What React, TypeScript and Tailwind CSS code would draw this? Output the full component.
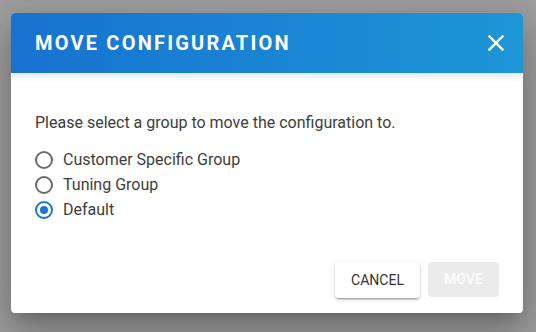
import { useState } from 'react'

const groups = ['Customer Specific Group', 'Tuning Group', 'Default']

export default function App() {
  const [selected, setSelected] = useState('Default')

  return (
    <div className="h-[332px] w-[536px] bg-[#9e9e9e] pt-[13px] pl-[11px] font-['Roboto',sans-serif]">
      <div className="relative flex h-[300px] w-[512px] flex-col overflow-hidden rounded-[4px] bg-white shadow-[0_11px_15px_-7px_rgba(0,0,0,0.2),0_24px_38px_3px_rgba(0,0,0,0.14),0_9px_46px_8px_rgba(0,0,0,0.12)]">
        {/* Header */}
        <div className="relative z-10 flex h-[60px] items-center justify-between bg-linear-to-r from-[#1872d0] to-[#1e96d7] pl-6 pr-[11px] shadow-[0_2px_8px_rgba(30,80,160,0.18)]">
          <h2 className="text-[20px] font-bold tracking-[0.11em] text-white">MOVE CONFIGURATION</h2>
          <button className="flex h-[32px] w-[32px] items-center justify-center text-white">
            <svg width="28" height="28" viewBox="0 0 24 24" fill="currentColor">
              <path d="M19 6.41L17.59 5 12 10.59 6.41 5 5 6.41 10.59 12 5 17.59 6.41 19 12 13.41 17.59 19 19 17.59 13.41 12z" />
            </svg>
          </button>
        </div>

        {/* Body */}
        <div className="flex-1 px-6 pt-[38px]">
          <p className="text-[16px] leading-6 text-[#3d3d3d]">Please select a group to move the configuration to.</p>
          <div className="mt-3 flex flex-col">
            {groups.map(g => (
              <label key={g} className="flex h-[25px] cursor-pointer items-center gap-[10px]" onClick={() => setSelected(g)}>
                <span
                  className={`flex h-[18px] w-[18px] items-center justify-center rounded-full border-2 ${
                    selected === g ? 'border-[#1976d2]' : 'border-[#6b6b6b]'
                  }`}
                >
                  {selected === g && <span className="h-[8px] w-[8px] rounded-full bg-[#1976d2]" />}
                </span>
                <span className="text-[16px] text-[#3d3d3d]">{g}</span>
              </label>
            ))}
          </div>
        </div>

        {/* Actions */}
        <div className="flex justify-end gap-2 pr-6 pb-[15px]">
          <button className="h-[36px] w-[85px] rounded-[4px] bg-white text-[14px] font-normal text-[#333] shadow-[0_3px_1px_-2px_rgba(0,0,0,0.2),0_2px_2px_0_rgba(0,0,0,0.14),0_1px_5px_0_rgba(0,0,0,0.12)]">
            CANCEL
          </button>
          <button disabled className="h-[35px] w-[71px] rounded-[4px] bg-[#ebebeb] text-[14px] font-bold text-[#fbfbfb]">
            MOVE
          </button>
        </div>
      </div>
    </div>
  )
}
